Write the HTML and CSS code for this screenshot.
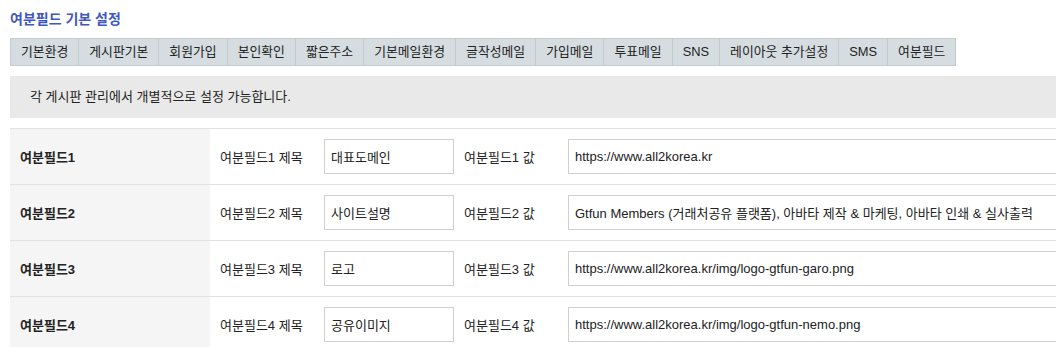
FILE: index.html
```html
<!DOCTYPE html>
<html lang="ko">
<head>
  <meta charset="UTF-8">
  <title>여분필드 기본 설정</title>
  <link rel="stylesheet" href="styles.css">
</head>
<body>

<div class="wrap">
  <h3 class="page-title">여분필드 기본 설정</h3>

  <ul class="tabs">
    <li>기본환경</li>
    <li>게시판기본</li>
    <li>회원가입</li>
    <li>본인확인</li>
    <li>짧은주소</li>
    <li>기본메일환경</li>
    <li>글작성메일</li>
    <li>가입메일</li>
    <li>투표메일</li>
    <li>SNS</li>
    <li>레이아웃 추가설정</li>
    <li>SMS</li>
    <li>여분필드</li>
  </ul>

  <div class="notice">각 게시판 관리에서 개별적으로 설정 가능합니다.</div>

  <div class="field-list">
    <div class="field-row">
      <div class="field-name">여분필드1</div>
      <div class="field-body">
        <label>여분필드1 제목</label>
        <input type="text" class="input-title" value="대표도메인">
        <label>여분필드1 값</label>
        <input type="text" class="input-value" value="https://www.all2korea.kr">
      </div>
    </div>
    <div class="field-row">
      <div class="field-name">여분필드2</div>
      <div class="field-body">
        <label>여분필드2 제목</label>
        <input type="text" class="input-title" value="사이트설명">
        <label>여분필드2 값</label>
        <input type="text" class="input-value" value="Gtfun Members (거래처공유 플랫폼), 아바타 제작 &amp; 마케팅, 아바타 인쇄 &amp; 실사출력">
      </div>
    </div>
    <div class="field-row">
      <div class="field-name">여분필드3</div>
      <div class="field-body">
        <label>여분필드3 제목</label>
        <input type="text" class="input-title" value="로고">
        <label>여분필드3 값</label>
        <input type="text" class="input-value" value="https://www.all2korea.kr/img/logo-gtfun-garo.png">
      </div>
    </div>
    <div class="field-row">
      <div class="field-name">여분필드4</div>
      <div class="field-body">
        <label>여분필드4 제목</label>
        <input type="text" class="input-title" value="공유이미지">
        <label>여분필드4 값</label>
        <input type="text" class="input-value" value="https://www.all2korea.kr/img/logo-gtfun-nemo.png">
      </div>
    </div>
  </div>
</div>

</body>
</html>
```

FILE: styles.css
```css
html, body {
  overflow: hidden;
}
* {
  margin: 0;
  padding: 0;
  box-sizing: border-box;
}
body {
  font-family: "Liberation Sans", "Noto Sans CJK KR", sans-serif;
  font-size: 13px;
  color: #222;
  background: #fff;
}
.wrap {
  width: 1300px;
  padding: 10px;
}
.page-title {
  font-size: 14px;
  font-weight: 700;
  line-height: 18px;
  color: #3f57c0;
  margin-bottom: 10px;
}
.tabs {
  list-style: none;
  display: flex;
  width: max-content;
  height: 28px;
  border: 1px solid #c3cbcf;
  background: #d6dde1;
  font-size: 12.85px;
}
.tabs li {
  padding: 0 10px;
  line-height: 26px;
  border-right: 1px solid #c3cbcf;
  color: #222;
}
.tabs li:last-child {
  border-right: none;
}
.notice {
  margin-top: 10px;
  height: 42px;
  line-height: 42px;
  padding: 0 20px;
  background: #e9e9e9;
  color: #222;
}
.field-list {
  margin-top: 10px;
}
.field-row {
  display: flex;
  border-top: 1px solid #e2e2e2;
}
.field-name {
  width: 200px;
  padding: 0 10px;
  background: #f5f5f5;
  font-weight: 700;
  display: flex;
  align-items: center;
}
.field-body {
  flex: 1;
  display: flex;
  align-items: center;
  padding: 10px;
}
.field-body label {
  width: 104px;
  flex: none;
}
.field-body label:nth-of-type(2) {
  margin-left: 10px;
}
.field-body input {
  height: 35px;
  border: 1px solid #d0d0d0;
  padding: 0 6px;
  font-family: inherit;
  font-size: 13px;
  color: #222;
  background: #fff;
  outline: none;
}
.input-title {
  width: 130px;
}
.input-value {
  width: 620px;
}
```
